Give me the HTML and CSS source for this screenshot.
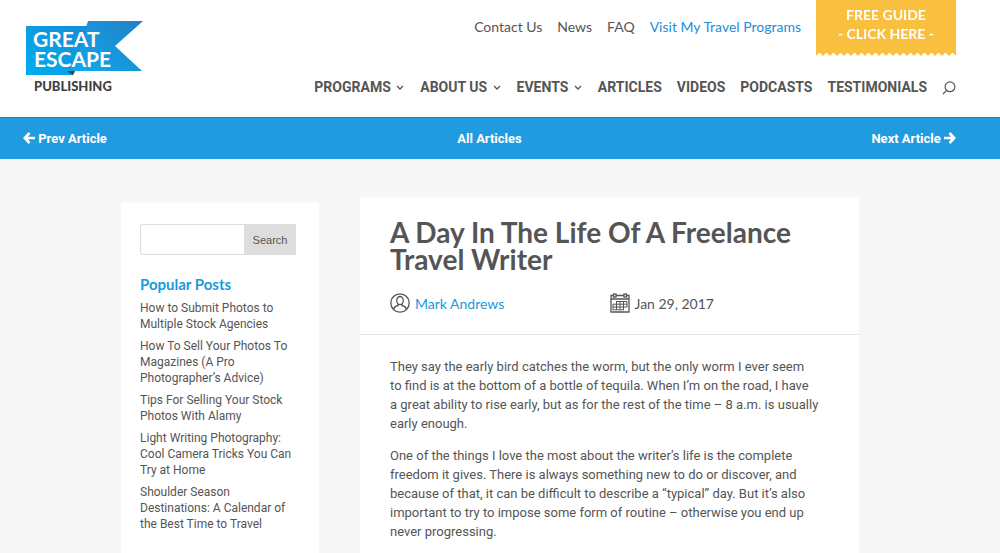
FILE: index.html
```html
<!DOCTYPE html>
<html lang="en">

<head>
    <meta charset="utf-8">
    <title>A Day In The Life Of A Freelance Travel Writer - Great Escape Publishing</title>
    <link rel="stylesheet" href="styles.css">
</head>

<body>
    <header class="site-header">
        <a class="logo" href="#" aria-label="Great Escape Publishing">
            <svg width="118" height="76" viewBox="0 0 118 76">
                <defs>
                    <linearGradient id="flag-left" x1="0" y1="1" x2="1" y2="0">
                        <stop offset="0" stop-color="#00adf0" />
                        <stop offset="1" stop-color="#178bd6" />
                    </linearGradient>
                    <linearGradient id="flag-right" x1="0" y1="1" x2="1" y2="0">
                        <stop offset="0" stop-color="#0fa9ec" />
                        <stop offset="1" stop-color="#2380c6" />
                    </linearGradient>
                </defs>
                <path d="M0 5 H62 L49 50 L47 54 H0 Z" fill="url(#flag-left)" />
                <path d="M62 0 H117 L89 25 L116 50 H47 Z" fill="url(#flag-right)" />
                <path d="M41 50 H49 L47 54 Z" fill="#414042" />
                <text class="logo-name" x="7" y="26">GREAT</text>
                <text class="logo-name" x="8" y="46">ESCAPE</text>
                <text class="logo-sub" x="8" y="70">PUBLISHING</text>
            </svg>
        </a>

        <div class="header-menus">
            <div class="top-row">
                <nav class="top-menu">
                    <a href="#">Contact Us</a>
                    <a href="#">News</a>
                    <a href="#">FAQ</a>
                    <a class="highlight" href="#">Visit My Travel Programs</a>
                </nav>
                <a class="free-guide" href="#">FREE GUIDE<br>- CLICK HERE -</a>
            </div>

            <nav class="main-menu">
                <a href="#">PROGRAMS <svg class="caret" viewBox="0 0 8 6"><path d="M1 1 L4 4 L7 1" /></svg></a>
                <a href="#">ABOUT US <svg class="caret" viewBox="0 0 8 6"><path d="M1 1 L4 4 L7 1" /></svg></a>
                <a href="#">EVENTS <svg class="caret" viewBox="0 0 8 6"><path d="M1 1 L4 4 L7 1" /></svg></a>
                <a href="#">ARTICLES</a>
                <a href="#">VIDEOS</a>
                <a href="#">PODCASTS</a>
                <a href="#">TESTIMONIALS</a>
                <button class="search-toggle" type="button" aria-label="Search">
                    <svg width="14" height="14" viewBox="0 0 14 14">
                        <circle cx="8" cy="5.8" r="4.9" />
                        <path d="M4.6 9.4 L1 13" />
                    </svg>
                </button>
            </nav>
        </div>
    </header>

    <nav class="article-nav">
        <a href="#"><svg class="arrow" viewBox="0 0 12 12"><path d="M6.5 1 L1.7 6 L6.5 11 M2 6 H12" /></svg> Prev Article</a>
        <a href="#">All Articles</a>
        <a class="next" href="#">Next Article <svg class="arrow" viewBox="0 0 12 12"><path d="M5.5 1 L10.3 6 L5.5 11 M10 6 H0" /></svg></a>
    </nav>

    <main class="content">
        <aside class="sidebar">
            <form class="search-form">
                <input type="text" aria-label="Search for">
                <button type="submit">Search</button>
            </form>

            <h4>Popular Posts</h4>
            <ul class="posts">
                <li><a href="#">How to Submit Photos to<br>Multiple Stock Agencies</a></li>
                <li><a href="#">How To Sell Your Photos To<br>Magazines (A Pro<br>Photographer’s Advice)</a></li>
                <li><a href="#">Tips For Selling Your Stock<br>Photos With Alamy</a></li>
                <li><a href="#">Light Writing Photography:<br>Cool Camera Tricks You Can<br>Try at Home</a></li>
                <li><a href="#">Shoulder Season<br>Destinations: A Calendar of<br>the Best Time to Travel</a></li>
            </ul>
        </aside>

        <article class="post">
            <header class="post-header">
                <h1>A Day In The Life Of A Freelance<br>Travel Writer</h1>
                <div class="post-meta">
                    <a class="author" href="#">
                        <svg width="20" height="20" viewBox="0 0 20 20">
                            <circle cx="10" cy="10" r="9.2" />
                            <ellipse cx="10" cy="7.6" rx="3.3" ry="4.1" />
                            <path d="M8 11 V12.5 Q4.2 13.4 3.6 16.4 M12 11 V12.5 Q15.8 13.4 16.4 16.4" />
                        </svg>
                        Mark Andrews
                    </a>
                    <span class="date">
                        <svg width="20" height="20" viewBox="0 0 20 20">
                            <path d="M3.5 2.5 H1 V19 H19 V2.5 H16.5 M6 2.5 H14 M1 6 H19" />
                            <rect x="3.5" y="1" width="2.5" height="3" />
                            <rect x="14" y="1" width="2.5" height="3" />
                            <path class="grid-lines" d="M6 8.5 H17 M3 11.2 H17 M3 14 H17 M3 16.8 H14 M3 11.2 V16.8 M6.5 8.5 V16.8 M10 8.5 V16.8 M13.5 8.5 V16.8 M17 8.5 V14" />
                        </svg>
                        Jan 29, 2017
                    </span>
                </div>
            </header>

            <div class="post-body">
                <p>They say the early bird catches the worm, but the only worm I ever seem<br>
                    to find is at the bottom of a bottle of tequila. When I’m on the road, I have<br>
                    a great ability to rise early, but as for the rest of the time – 8 a.m. is usually<br>
                    early enough.</p>
                <p>One of the things I love the most about the writer’s life is the complete<br>
                    freedom it gives. There is always something new to do or discover, and<br>
                    because of that, it can be difficult to describe a “typical” day. But it’s also<br>
                    important to try to impose some form of routine – otherwise you end up<br>
                    never progressing.</p>
            </div>
        </article>
    </main>
</body>

</html>
```
FILE: styles.css
```css
* {
    box-sizing: border-box;
}

body {
    margin: 0;
    background: #f7f7f7;
    color: #555;
    font-family: 'Lato', sans-serif;
    font-size: 14px;
    line-height: 19px;
}

a {
    color: inherit;
    text-decoration: none;
}

svg {
    flex: none;
}

.site-header {
    display: flex;
    justify-content: space-between;
    align-items: flex-start;
    padding: 0 44px 20px 26px;
    background: #fff;
}

.logo {
    margin-top: 21px;
}

.logo svg {
    display: block;
}

.logo-name {
    fill: #fff;
    font-size: 21px;
    font-weight: 700;
}

.logo-sub {
    fill: #414042;
    font-size: 13px;
    font-weight: 900;
}

.top-row {
    display: flex;
    justify-content: flex-end;
}

.top-menu {
    display: flex;
    gap: 15px;
    padding: 17px 15px 0 0;
}

.top-menu .highlight {
    color: #1f8ddb;
}

.free-guide {
    width: 140px;
    height: 56px;
    padding-top: 5px;
    background: #f9bf3e;
    color: #fff;
    font-weight: 700;
    text-align: center;
    /* torn paper edge */
    mask: conic-gradient(from -45deg at bottom, #000 90deg, #0000 0) top / 7px 100% repeat-x;
}

.main-menu {
    display: flex;
    justify-content: flex-end;
    align-items: center;
    gap: 15px;
    margin-top: 22px;
    font-family: 'Roboto', sans-serif;
    font-weight: 700;
}

.caret {
    width: 8px;
    height: 6px;
    margin: 0 1px 1px 2px;
    fill: none;
    stroke: #555;
    stroke-width: 1.3;
}

.search-toggle {
    padding: 0;
    border: none;
    background: none;
    cursor: pointer;
}

.search-toggle svg {
    display: block;
    fill: none;
    stroke: #555;
    stroke-width: 1.2;
}

.article-nav {
    display: grid;
    grid-template-columns: 1fr 1fr 1fr;
    align-items: center;
    height: 42px;
    padding: 0 44px 0 23px;
    border-top: 1px solid #1787cb;
    background: #219bdf;
    color: #fff;
    font-family: 'Roboto', sans-serif;
    font-size: 13px;
    font-weight: 700;
    text-align: center;
}

.article-nav a:first-child {
    text-align: left;
}

.article-nav .next {
    text-align: right;
}

.arrow {
    width: 12px;
    height: 12px;
    vertical-align: -1px;
    fill: none;
    stroke: #fff;
    stroke-width: 2.6;
}

.content {
    display: grid;
    grid-template-columns: 198px minmax(0, 1fr);
    align-items: start;
    gap: 41px;
    padding: 38px 141px 0 121px;
}

.sidebar {
    margin-top: 6px;
    padding: 21px 19px;
    background: #fff;
}

.search-form {
    display: flex;
    width: 156px;
    height: 31px;
}

.search-form input {
    flex: 1;
    min-width: 0;
    border: 1px solid #ddd;
    border-right: none;
    border-radius: 3px 0 0 3px;
}

.search-form button {
    width: 52px;
    padding: 0;
    border: none;
    background: #ddd;
    color: #555;
    font-family: 'Liberation Sans', sans-serif;
    font-size: 11px;
}

.sidebar h4 {
    margin: 20px 0 7px;
    color: #159bdc;
    font-size: 15px;
    line-height: 18px;
}

.posts {
    margin: 0;
    padding: 0;
    list-style: none;
    font-family: 'Roboto', sans-serif;
    font-size: 12px;
    line-height: 16px;
}

.posts li {
    margin-bottom: 6px;
}

.post {
    background: #fff;
}

.post-header {
    padding: 22px 30px 21px;
    border-bottom: 1px solid #e6e6e6;
}

.post-header h1 {
    margin: 0;
    font-size: 28px;
    line-height: 27px;
    white-space: nowrap;
}

.post-meta {
    display: grid;
    grid-template-columns: 1fr 1fr;
    margin-top: 20px;
}

.post-meta svg {
    fill: none;
    stroke: #555;
    stroke-width: 1.3;
}

.post-meta .grid-lines {
    stroke-width: 1;
}

.author,
.date {
    display: flex;
    align-items: center;
    gap: 5px;
}

.author {
    color: #159bdc;
}

.post-body {
    padding: 22px 30px;
    font-family: 'Roboto', sans-serif;
    font-size: 13px;
    white-space: nowrap;
}

.post-body p {
    margin: 0 0 13px;
}
```
